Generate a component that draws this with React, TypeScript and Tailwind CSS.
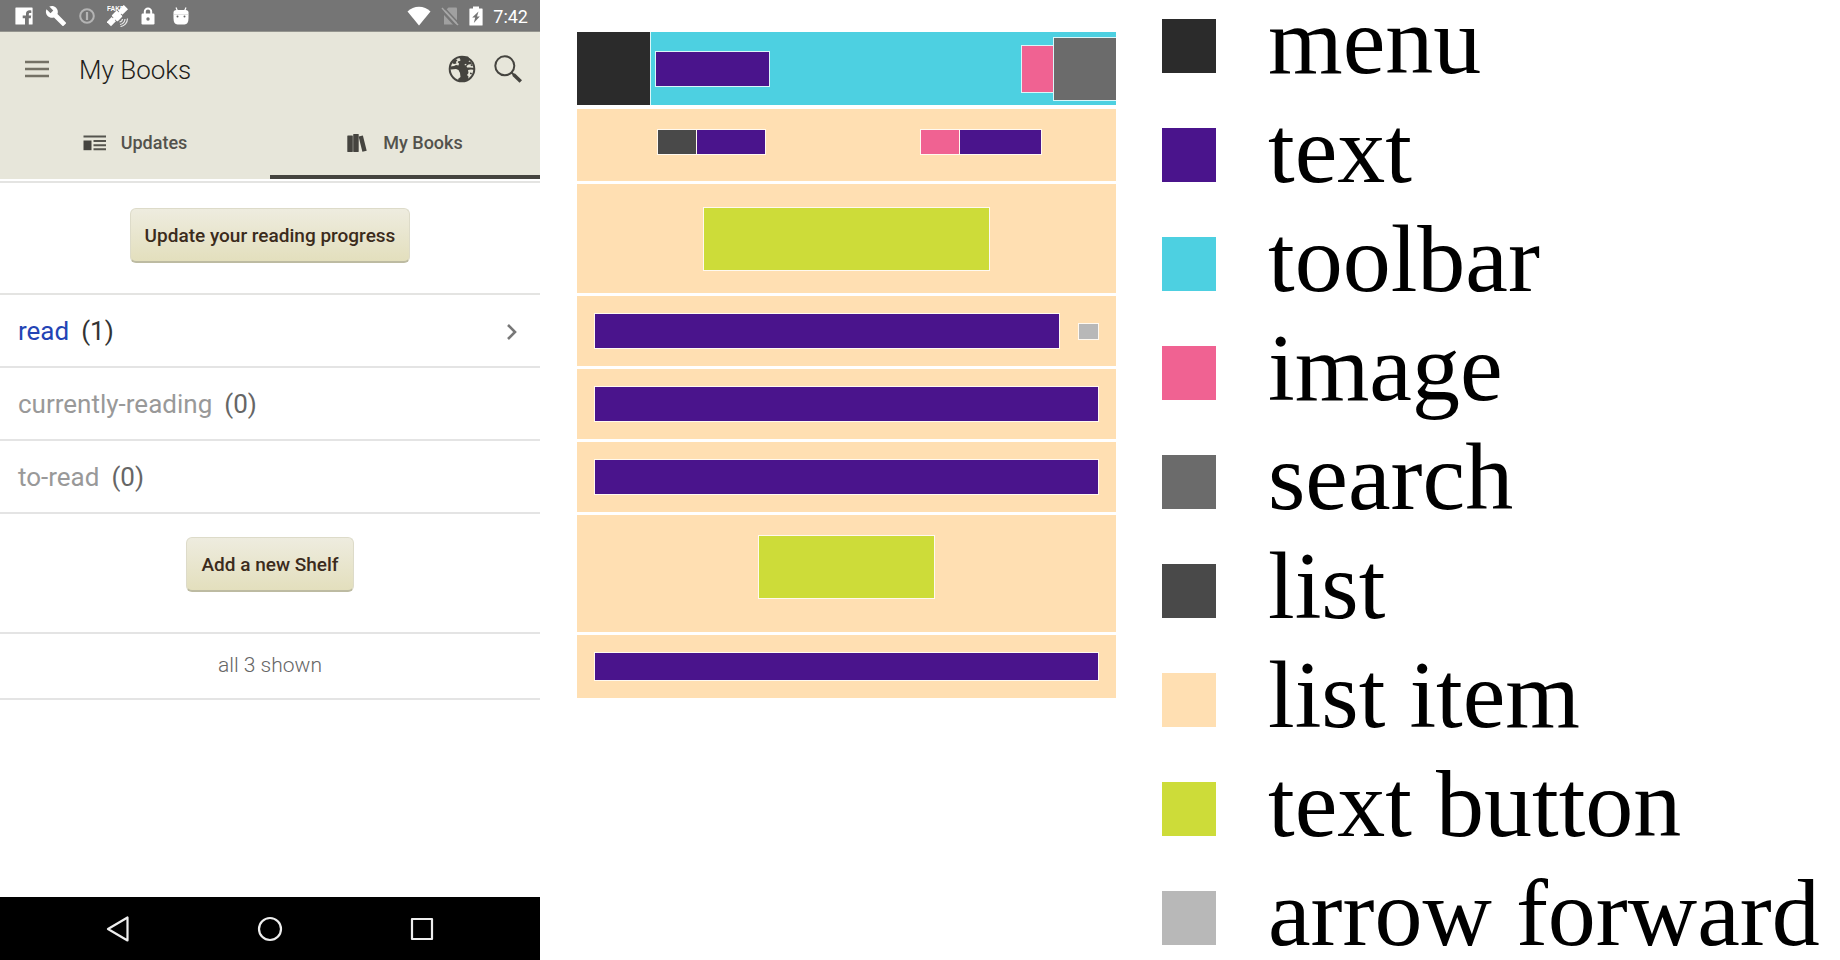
import type { ReactNode } from "react";

/* ---------- Status bar icons ---------- */

function FacebookIcon() {
  return (
    <svg viewBox="0 0 18 18" className="size-[18px]" aria-hidden="true">
      <path
        fill="#fff"
        d="M1 .5h16a.6.6 0 0 1 .6.6v15.8a.6.6 0 0 1-.6.6h-3.2v-6.3h2l.4-2.6h-2.4V7.2c0-.9.4-1.3 1.3-1.3h1.2V3.4c-.5-.1-1.100-.1-1.700-.1-2.300 0-3.600 1.300-3.600 3.500v1.800H7.700v2.600H10v6.300H1a.6.6 0 0 1-.6-.6V1.100A.6.6 0 0 1 1 .5z"
      />
    </svg>
  );
}

function WrenchIcon() {
  return (
    <svg viewBox="0 0 24 24" className="size-[22px]" aria-hidden="true">
      <path
        fill="#fff"
        d="M22.700 19l-9.100-9.100c.9-2.300.4-5-1.500-6.900-2-2-5-2.400-7.400-1.300L9 6 6 9 1.600 4.700C.4 7.100.9 10.100 2.900 12.100c1.900 1.900 4.600 2.400 6.900 1.500l9.100 9.100c.4.4 1 .4 1.400 0l2.300-2.300c.5-.4.5-1.100.1-1.400z"
      />
    </svg>
  );
}

function InfoIcon() {
  return (
    <svg viewBox="0 0 16 16" className="size-4" fill="none" stroke="#b4b4b4" aria-hidden="true">
      <circle cx="8" cy="8" r="6.800" strokeWidth="2" />
      <path d="M8 4v8" strokeWidth="2.200" />
    </svg>
  );
}

function SatelliteIcon() {
  return (
    <svg viewBox="0 0 22 22" className="size-[22px]" aria-hidden="true">
      <text x="0" y="5.500" fill="#fff" fontSize="6.500" fontWeight="700" fontFamily="Liberation Sans, sans-serif">
        FAKE
      </text>
      <g transform="rotate(-45 10 11)">
        <rect x="-1.500" y="8" width="7" height="6" fill="#fff" />
        <rect x="6.300" y="6.800" width="7.500" height="8.400" rx="1" fill="#fff" />
        <rect x="14.600" y="8" width="8" height="6" fill="#fff" />
        <path d="M4.500 11h12" stroke="#fff" strokeWidth="2.500" />
      </g>
      <path
        d="M13 19.500a6 6 0 0 0 5-5.500M13.500 21.500a8 8 0 0 0 7-8M12.500 17a3.500 3.500 0 0 0 3-3"
        fill="none"
        stroke="#e6e6e6"
        strokeWidth="1.200"
      />
    </svg>
  );
}

function LockIcon() {
  return (
    <svg viewBox="0 0 14 18" className="h-[18px] w-3.5" aria-hidden="true">
      <path d="M3.800 7V4.600a3.200 3.200 0 0 1 6.400 0V7" fill="none" stroke="#fff" strokeWidth="2" />
      <rect x=".5" y="6.500" width="13" height="11" rx="1.200" fill="#fff" />
      <circle cx="7" cy="12" r="1.700" fill="#757575" />
    </svg>
  );
}

function AndroidIcon() {
  return (
    <svg viewBox="0 0 16 18" className="h-[18px] w-4" aria-hidden="true">
      <path d="M3 .5l1.500 3.500M13 .5L11.500 4" stroke="#fff" strokeWidth="1.200" />
      <path d="M.5 5.500Q.5 3 3.500 3h9q3 0 3 2.500V11q0 6.500-4 6.500h-7q-4 0-4-6.500z" fill="#fff" />
      <path d="M.5 7.500h15" stroke="#d0d0d0" strokeWidth=".6" />
      <circle cx="4.500" cy="9.500" r="1" fill="#666" />
      <circle cx="11.500" cy="9.500" r="1" fill="#666" />
    </svg>
  );
}

function WifiIcon() {
  return (
    <svg viewBox="0 0 24 20" className="h-5 w-6" aria-hidden="true">
      <path d="M.5 5.500C6.500-.8 17.500-.8 23.500 5.500L12 19.500z" fill="#fff" />
    </svg>
  );
}

function NoSimIcon() {
  return (
    <svg viewBox="0 0 18 20" className="h-5 w-[18px]" aria-hidden="true">
      <path d="M7.500 1.500H15a1 1 0 0 1 1 1v16H3V6z" fill="#a0a0a0" />
      <path d="M0 4L15 20" stroke="#757575" strokeWidth="2.500" />
      <path d="M1 2L17 19" stroke="#a8a8a8" strokeWidth="1.500" />
      <path d="M3 1.500L18 17.500" stroke="#757575" strokeWidth="1.500" />
    </svg>
  );
}

function BatteryIcon() {
  return (
    <svg viewBox="0 0 14 20" className="h-5 w-3.5" aria-hidden="true">
      <path
        d="M4 .5h6v2h3a.6.6 0 0 1 .6.6v15.800a.6.6 0 0 1-.6.6H1a.6.6 0 0 1-.6-.6V3.100A.6.6 0 0 1 1 2.500h3z"
        fill="#fff"
      />
      <path d="M9.500 5.500L3.200 11.500h3L4.800 17l6-6.500H8z" fill="#757575" />
    </svg>
  );
}

/* ---------- App icons ---------- */

function MenuIcon() {
  return (
    <svg viewBox="0 0 26 18" className="h-[18px] w-[26px]" aria-hidden="true">
      <path d="M1 2h24M1 9h24M1 16h24" stroke="#747165" strokeWidth="2.600" />
    </svg>
  );
}

function GlobeIcon() {
  return (
    <svg viewBox="0 0 28 28" className="size-7" aria-hidden="true">
      <circle cx="14" cy="14" r="12.300" fill="#e7e6da" stroke="#45443f" strokeWidth="2" />
      <path
        fill="#45443f"
        d="M12 1.500h8l2 3-1.500 2.500 2-.5 1.500 2.500-3.500.5-2 1.500.5 1.500h3l5 .5v2l-4-.5-3 .5.5 3-1.500 2 1.500 1.500-.5 3.500-4 1h-5l-1-2 2.500-2-.5-4-1.500-3-2.500-1-5 .5-1-1 .500-2 3.500-.5 2-1 2.500.5.500-2-1.500-1.500 2-1.500z"
      />
      <path fill="#45443f" d="M4 8l3-4 2.500 1-1.500 2 .5 1.500-2.500.5zM22 17.500l2 .5-.5 1.500-1.500-.5zM23 9l2 1-1 1.200-1.500-.7z" />
      <path fill="#e7e6da" d="M10.500 5l1.500-1 .6 1.200-1.300 1zM16.500 9.500l1.500-.8.500 1-1.500.8z" />
    </svg>
  );
}

function SearchIcon() {
  return (
    <svg viewBox="0 0 28 28" className="size-7" fill="none" stroke="#45443f" aria-hidden="true">
      <circle cx="10.800" cy="10.800" r="9.500" strokeWidth="2" />
      <path d="M17.500 17.500l3 3" strokeWidth="2" />
      <path d="M19.500 19.500l7.300 7" strokeWidth="3.600" />
    </svg>
  );
}

function UpdatesIcon() {
  return (
    <svg viewBox="0 0 24 16" className="h-4 w-6" aria-hidden="true">
      <path d="M.5 1.500h22.500M10.500 6h12.500M10.500 10.200h12.500M10.500 14.200h12.500" stroke="#55544e" strokeWidth="1.900" />
      <path d="M.5 5.500h8v9.700h-8z" fill="#45443f" />
    </svg>
  );
}

function BooksIcon() {
  return (
    <svg viewBox="0 0 20 18" className="h-[18px] w-5" fill="#45443f" aria-hidden="true">
      <rect x=".3" y="1.500" width="5.500" height="16.500" rx=".4" />
      <rect x="6.200" y="0" width="5.500" height="18" rx=".4" />
      <path d="M11.600 2.600l4.300-1 3.800 15.200-4.300 1z" />
    </svg>
  );
}

/* ---------- Phone ---------- */

function ShelfButton({ children }: { children: ReactNode }) {
  return (
    <button
      type="button"
      className="h-[55px] rounded-md border border-b-2 border-[#dddbc9] border-b-[#bdbba2] bg-linear-to-b from-[#eeecdf] to-[#e3dfbd] px-3.5 pt-0.5 text-[19px] font-medium whitespace-nowrap text-[#3b2b1c]"
    >
      {children}
    </button>
  );
}

const shelves = [
  { name: "read", count: 1 },
  { name: "currently-reading", count: 0 },
  { name: "to-read", count: 0 },
];

function Phone() {
  return (
    <section className="flex min-h-screen flex-col font-[Roboto,sans-serif]">
      <div className="flex h-8 items-center justify-between border-b border-[#95958f] bg-[#757575] pr-3 pl-[15px]">
        <div className="flex items-center">
          <FacebookIcon />
          <span className="ml-3"><WrenchIcon /></span>
          <span className="ml-3"><InfoIcon /></span>
          <span className="ml-3"><SatelliteIcon /></span>
          <span className="ml-3"><LockIcon /></span>
          <span className="ml-[18px]"><AndroidIcon /></span>
        </div>
        <div className="flex items-center gap-2.5 text-white">
          <WifiIcon />
          <NoSimIcon />
          <BatteryIcon />
          <time className="pt-0.5 text-lg leading-6">7:42</time>
        </div>
      </div>

      <header className="bg-[#e7e6da]">
        <div className="flex h-[74px] items-center pr-[18px] pl-6">
          <button type="button" aria-label="Menu"><MenuIcon /></button>
          <h1 className="ml-[29px] pt-0.5 text-[26px] font-light text-[#1f1e1a]">My Books</h1>
          <button type="button" aria-label="Explore" className="ml-auto"><GlobeIcon /></button>
          <button type="button" aria-label="Search" className="ml-[18px]"><SearchIcon /></button>
        </div>
        <div role="tablist" className="grid h-[73px] grid-cols-2 text-lg font-medium text-[#53524c]">
          <button type="button" role="tab" aria-selected="false" className="flex items-center justify-center gap-3.5">
            <UpdatesIcon />
            Updates
          </button>
          <button
            type="button"
            role="tab"
            aria-selected="true"
            className="flex items-center justify-center gap-4 border-b-4 border-[#45443f] pt-1"
          >
            <BooksIcon />
            My Books
          </button>
        </div>
      </header>

      <div className="mt-0.5 flex h-[114px] items-start justify-center border-y-2 border-[#e4e4e2] pt-[25px]">
        <ShelfButton>Update your reading progress</ShelfButton>
      </div>
      <ul>
        {shelves.map((shelf) => (
          <li key={shelf.name} className="border-b-2 border-[#e4e4e4]">
            <a href="#shelf" className="flex h-[71px] items-center gap-3 pt-0.5 pr-[23px] pl-[18px] text-[26px]">
              <span className={shelf.count ? "text-[#2344b5]" : "text-[#999]"}>{shelf.name}</span>
              <span className={shelf.count ? "text-[#333]" : "text-[#666]"}>({shelf.count})</span>
              {shelf.count > 0 && (
                <svg viewBox="0 0 10 16" className="ml-auto h-4 w-2.5" aria-hidden="true">
                  <path d="M1 1l7 7-7 7" fill="none" stroke="#777" strokeWidth="2.600" />
                </svg>
              )}
            </a>
          </li>
        ))}
      </ul>
      <div className="flex h-[120px] items-start justify-center border-b-2 border-[#e4e4e4] pt-[23px]">
        <ShelfButton>Add a new Shelf</ShelfButton>
      </div>
      <p className="flex h-[66px] items-center justify-center border-b-2 border-[#e4e4e4] text-[21px] font-light text-[#666]">
        all 3 shown
      </p>

      <nav className="mt-auto flex h-[63px] items-center justify-around bg-black px-[42px]">
        <button type="button" aria-label="Back">
          <svg viewBox="0 0 26 26" className="size-[26px]" fill="none" stroke="#eee" strokeWidth="2.200" strokeLinejoin="round" aria-hidden="true">
            <path d="M22.500 1.500v23L3 13z" />
          </svg>
        </button>
        <button type="button" aria-label="Home">
          <svg viewBox="0 0 26 26" className="size-[26px]" fill="none" stroke="#eee" strokeWidth="2.200" aria-hidden="true">
            <circle cx="13" cy="13" r="11" />
          </svg>
        </button>
        <button type="button" aria-label="Overview">
          <svg viewBox="0 0 26 26" className="size-[26px]" fill="none" stroke="#eee" strokeWidth="2.200" strokeLinejoin="round" aria-hidden="true">
            <path d="M3 3h20v20H3z" />
          </svg>
        </button>
      </nav>
    </section>
  );
}

/* ---------- Annotated layout ---------- */

function Box({ className }: { className: string }) {
  return <div className={`border border-white/80 bg-clip-padding ${className}`} />;
}

function Annotations() {
  return (
    <section aria-label="Annotated layout" className="flex flex-col gap-[3px] pt-8 pl-[37px]">
      <div className="mb-px flex h-[73px] items-center bg-[#4dd0e1]">
        <div className="h-full w-[74px] border-r border-white/80 bg-[#2b2b2b] bg-clip-padding" />
        <Box className="ml-1 h-9 w-[115px] bg-[#4a148c]" />
        <Box className="ml-auto h-12 w-8 border-r-0 bg-[#f06292]" />
        <Box className="h-16 w-[63px] border-r-0 bg-[#6b6b6b]" />
      </div>
      <div className="grid h-[72px] grid-cols-2 bg-[#ffdfb2] pt-5">
        <div className="flex justify-center">
          <Box className="h-[26px] w-10 bg-[#494949]" />
          <Box className="h-[26px] w-[69px] border-l-0 bg-[#4a148c]" />
        </div>
        <div className="flex justify-center">
          <Box className="h-[26px] w-10 bg-[#f06292]" />
          <Box className="h-[26px] w-[82px] border-l-0 bg-[#4a148c]" />
        </div>
      </div>
      <div className="flex h-[109px] items-center justify-center bg-[#ffdfb2]">
        <Box className="h-16 w-[287px] bg-[#cddc39]" />
      </div>
      <div className="flex h-[70px] items-center gap-[18px] bg-[#ffdfb2] px-[17px]">
        <Box className="h-9 flex-1 bg-[#4a148c]" />
        <Box className="h-[17px] w-[21px] bg-[#b8b8b8]" />
      </div>
      <div className="flex h-[70px] items-center bg-[#ffdfb2] px-[17px]">
        <Box className="h-9 flex-1 bg-[#4a148c]" />
      </div>
      <div className="flex h-[70px] items-center bg-[#ffdfb2] px-[17px]">
        <Box className="h-9 flex-1 bg-[#4a148c]" />
      </div>
      <div className="flex h-[117px] items-start justify-center bg-[#ffdfb2] pt-5">
        <Box className="h-16 w-[177px] bg-[#cddc39]" />
      </div>
      <div className="flex h-[63px] items-center bg-[#ffdfb2] px-[17px]">
        <Box className="h-[29px] flex-1 bg-[#4a148c]" />
      </div>
    </section>
  );
}

/* ---------- Legend ---------- */

const legend = [
  { label: "menu", swatch: "bg-[#2b2b2b]" },
  { label: "text", swatch: "bg-[#4a148c]" },
  { label: "toolbar", swatch: "bg-[#4dd0e1]" },
  { label: "image", swatch: "bg-[#f06292]" },
  { label: "search", swatch: "bg-[#6b6b6b]" },
  { label: "list", swatch: "bg-[#494949]" },
  { label: "list item", swatch: "bg-[#ffdfb2]" },
  { label: "text button", swatch: "bg-[#cddc39]" },
  { label: "arrow forward", swatch: "bg-[#b8b8b8]" },
];

function Legend() {
  return (
    <ul className="flex flex-col gap-7 pl-[46px] font-['Liberation_Serif',serif] text-[96px] leading-[81px] text-black">
      {legend.map((entry) => (
        <li key={entry.label} className="flex items-baseline gap-[52px] whitespace-nowrap">
          <span className={`h-[54px] w-[54px] shrink-0 ${entry.swatch}`} />
          {entry.label}
        </li>
      ))}
    </ul>
  );
}

export default function App() {
  return (
    <main className="grid min-h-screen grid-cols-[540fr_576fr_724fr] bg-white">
      <Phone />
      <Annotations />
      <Legend />
    </main>
  );
}
